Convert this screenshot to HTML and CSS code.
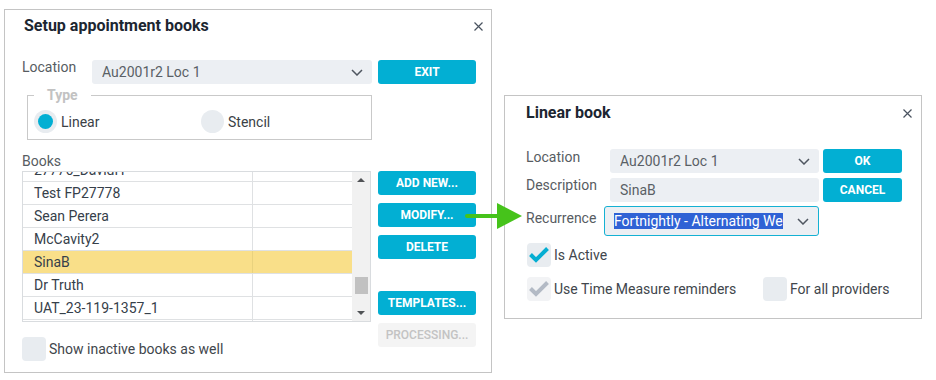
FILE: index.html
```html
<!DOCTYPE html>
<html>
<head>
<meta charset="utf-8">
<title>Setup appointment books</title>
<link rel="stylesheet" href="styles.css">
</head>
<body>
<div class="stage">
  <section class="dlg dlg-setup">
    <header class="dlg-head head-setup">
      <h1 class="dlg-title">Setup appointment books</h1>
      <svg class="close" width="9" height="9" viewBox="0 0 9 9"><path d="M0.5 0.5L8.5 8.5M8.5 0.5L0.5 8.5" stroke="#4a5360" stroke-width="1.2" fill="none"/></svg>
    </header>

    <div class="loc-row">
      <span class="lbl">Location</span>
      <div class="select">
        <span class="sel-text">Au2001r2 Loc 1</span>
        <svg class="chev" width="12" height="7" viewBox="0 0 12 7"><path d="M1 1L6 6L11 1" stroke="#4f5660" stroke-width="1.5" fill="none"/></svg>
      </div>
      <button class="btn">EXIT</button>
    </div>

    <fieldset class="type">
      <legend>Type</legend>
      <label class="radio on"><span class="dot"></span>Linear</label>
      <label class="radio"><span class="dot"></span>Stencil</label>
    </fieldset>

    <div class="lbl books-lbl">Books</div>

    <div class="books">
      <div class="list">
        <div class="rows">
          <div class="tr"><div class="td">27776_DavidH</div><div class="td"></div></div>
          <div class="tr"><div class="td">Test FP27778</div><div class="td"></div></div>
          <div class="tr"><div class="td">Sean Perera</div><div class="td"></div></div>
          <div class="tr"><div class="td">McCavity2</div><div class="td"></div></div>
          <div class="tr sel"><div class="td">SinaB</div><div class="td"></div></div>
          <div class="tr"><div class="td">Dr Truth</div><div class="td"></div></div>
          <div class="tr"><div class="td">UAT_23-119-1357_1</div><div class="td"></div></div>
          <div class="tr"><div class="td"></div><div class="td"></div></div>
        </div>
        <div class="scroll">
          <span class="sc-up"></span>
          <span class="sc-track"><span class="sc-thumb"></span></span>
          <span class="sc-down"></span>
        </div>
      </div>
      <div class="btn-col">
        <button class="btn">ADD NEW...</button>
        <button class="btn">MODIFY...</button>
        <button class="btn">DELETE</button>
        <button class="btn gap-top">TEMPLATES...</button>
        <button class="btn disabled">PROCESSING...</button>
      </div>
      <label class="check inactive"><span class="box"></span>Show inactive books as well</label>
    </div>
  </section>

  <section class="dlg dlg-linear">
    <header class="dlg-head head-linear">
      <h2 class="dlg-title">Linear book</h2>
      <svg class="close" width="9" height="9" viewBox="0 0 9 9"><path d="M0.5 0.5L8.5 8.5M8.5 0.5L0.5 8.5" stroke="#4a5360" stroke-width="1.2" fill="none"/></svg>
    </header>

    <div class="form">
      <span class="lbl">Location</span>
      <div class="select sm">
        <span class="sel-text">Au2001r2 Loc 1</span>
        <svg class="chev" width="12" height="7" viewBox="0 0 12 7"><path d="M1 1L6 6L11 1" stroke="#4f5660" stroke-width="1.5" fill="none"/></svg>
      </div>
      <button class="btn">OK</button>

      <span class="lbl r2">Description</span>
      <div class="select sm r2"><span class="sel-text">SinaB</span></div>
      <button class="btn r2">CANCEL</button>

      <span class="lbl r3">Recurrence</span>
      <div class="select focus r3">
        <span class="sel-text"><span class="hl">Fortnightly - Alternating We</span></span>
        <svg class="chev" width="12" height="7" viewBox="0 0 12 7"><path d="M1 1L6 6L11 1" stroke="#4f5660" stroke-width="1.5" fill="none"/></svg>
      </div>
    </div>

    <label class="check active"><span class="box"><svg width="24" height="24" viewBox="0 0 24 24"><path d="M3.5 11.5L9 17L20.5 5.5" stroke="#05aed2" stroke-width="4" fill="none"/></svg></span>Is Active</label>
    <div class="check-row">
      <label class="check tm"><span class="box dis"><svg width="24" height="24" viewBox="0 0 24 24"><path d="M3.5 11.5L9 17L20.5 5.5" stroke="#b3bac5" stroke-width="4" fill="none"/></svg></span>Use Time Measure reminders</label>
      <label class="check"><span class="box"></span>For all providers</label>
    </div>
  </section>

  <svg class="arrow" width="64" height="32" viewBox="462 200 64 32">
    <path d="M467 216H499" stroke="#46c31b" stroke-width="4" stroke-linecap="round" fill="none"/>
    <polygon points="497,203 522,216 497,229" fill="#46c31b"/>
  </svg>
</div>
</body>
</html>
```

FILE: styles.css
```css
* { box-sizing: border-box; }
html, body { margin: 0; background: #fff; }
body {
  font-family: Roboto, "Liberation Sans", sans-serif;
  font-size: 14px;
  line-height: 20px;
  color: #4a4f55;
  width: 936px;
  height: 380px;
  overflow: hidden;
}
.stage {
  position: relative;
  display: flex;
  align-items: flex-start;
  gap: 12px;
  padding: 9px 0 0 4px;
}

/* dialogs */
.dlg { border: 1px solid #c4c4c4; background: #fff; }
.dlg-setup { width: 488px; height: 364px; padding: 6px 15px 0 17px; }
.dlg-linear { width: 418px; height: 224px; margin-top: 86px; padding: 7px 19px 0 21px; }

.dlg-head { display: flex; justify-content: space-between; align-items: center; height: 20px; }
.dlg-title { margin: 0; font-size: 16px; font-weight: 700; line-height: 20px; color: #1c2631; }
.head-setup .dlg-title { margin-left: 2px; }
.head-setup .close { margin-right: -7px; }
.head-linear .close { margin-right: -10px; }

.lbl { color: #575c62; line-height: 20px; }

/* select / inputs */
.select {
  display: flex;
  align-items: center;
  justify-content: space-between;
  height: 24px;
  background: #eceff3;
  border-radius: 3px;
  padding: 0 9px 0 10px;
  color: #5a5f66;
}
.sel-text { white-space: nowrap; overflow: hidden; }

/* buttons */
.btn {
  display: block;
  height: 24px;
  border: 0;
  border-radius: 3px;
  background: #02afd3;
  color: #fff;
  font-family: inherit;
  font-size: 12px;
  font-weight: 700;
  line-height: 24px;
  padding: 0;
  text-align: center;
}
.btn.disabled { background: #f4f4f4; color: #c3c3c3; font-weight: 500; }

/* location row (setup) */
.loc-row {
  display: grid;
  grid-template-columns: 70px 280px 104px;
  margin-top: 24px;
}
.loc-row .lbl { margin-top: -3px; }
.loc-row .btn { width: 98px; justify-self: end; }

/* type fieldset */
.type {
  width: 345px;
  min-width: 0;
  margin: 1px 0 0 5px;
  border: 1px solid #c9c9c9;
  padding: 5px 0 6px 6px;
  display: flex;
}
.type legend {
  padding: 0 13px;
  font-weight: 700;
  color: #c2c2c2;
  line-height: 20px;
}
.radio {
  display: flex;
  align-items: center;
  gap: 4px;
  width: 167px;
  height: 23px;
  color: #3b3f46;
}
.dot {
  width: 23px;
  height: 23px;
  border-radius: 50%;
  background: #e8ecf0;
  display: flex;
  align-items: center;
  justify-content: center;
}
.radio.on .dot::after {
  content: "";
  width: 15px;
  height: 15px;
  border-radius: 50%;
  background: #02afd3;
}

.books-lbl { margin-top: 11px; }

/* books area */
.books {
  display: grid;
  grid-template-columns: 349px 98px;
  grid-template-rows: 151px auto;
  column-gap: 7px;
}
.list {
  display: flex;
  border: 1px solid #d9dcdf;
  overflow: hidden;
  height: 151px;
}
.rows { flex: 1; margin-top: -13px; }
.tr { display: flex; height: 23px; border-bottom: 1px solid #dfe1e3; }
.td { line-height: 22px; color: #36404a; white-space: nowrap; }
.td:first-child { width: 230px; border-right: 1px solid #dfe1e3; padding-left: 11px; }
.td:last-child { flex: 1; }
.tr.sel { background: #f9df89; }
.tr.sel .td { border-right-color: #e9d27e; }

.scroll {
  width: 18px;
  background: #f1f1f1;
  display: flex;
  flex-direction: column;
  align-items: center;
  padding: 6px 0 6px;
}
.sc-up { width: 0; height: 0; border-left: 4px solid transparent; border-right: 4px solid transparent; border-bottom: 4px solid #505356; }
.sc-down { width: 0; height: 0; border-left: 4px solid transparent; border-right: 4px solid transparent; border-top: 4px solid #505356; }
.sc-track { flex: 1; width: 13px; padding-top: 95px; }
.sc-thumb { display: block; width: 13px; height: 17px; background: #c1c1c1; }

.btn-col {
  grid-column: 2;
  grid-row: 1 / span 2;
  display: flex;
  flex-direction: column;
  gap: 8px;
}
.btn-col .gap-top { margin-top: 24px; }

.check {
  display: flex;
  align-items: center;
  gap: 3px;
  height: 24px;
  color: #41464c;
}
.box {
  width: 24px;
  height: 24px;
  border-radius: 4px;
  background: #e8ecf0;
  display: block;
  flex: none;
}
.box svg { display: block; }
.box.dis { background: #f2f3f5; }
.inactive { grid-column: 1; grid-row: 2; margin-top: 15px; }

/* linear form */
.form {
  display: grid;
  grid-template-columns: 84px 209px 83px;
  margin-top: 26px;
}
.form .btn { width: 79px; justify-self: end; }
.form .lbl { margin-top: -2px; }
.form .r2 { margin-top: 5px; }
.form .lbl.r2 { margin-top: 2px; }
.form .lbl.r3 { margin-top: 6px; }
.select.focus {
  grid-column: 2;
  margin-top: 4px;
  margin-left: -6px;
  height: 30px;
  border: 1px solid #14b1d3;
  padding-left: 9px;
}
.hl { background: #2f62d5; color: #fff; line-height: 16px; display: inline-block; }

.active { margin-top: 7px; margin-left: 1px; }
.check-row { display: flex; margin-top: 10px; margin-left: 1px; }
.check.tm { width: 236px; }

/* arrow overlay */
.arrow { position: absolute; left: 462px; top: 200px; }
```
